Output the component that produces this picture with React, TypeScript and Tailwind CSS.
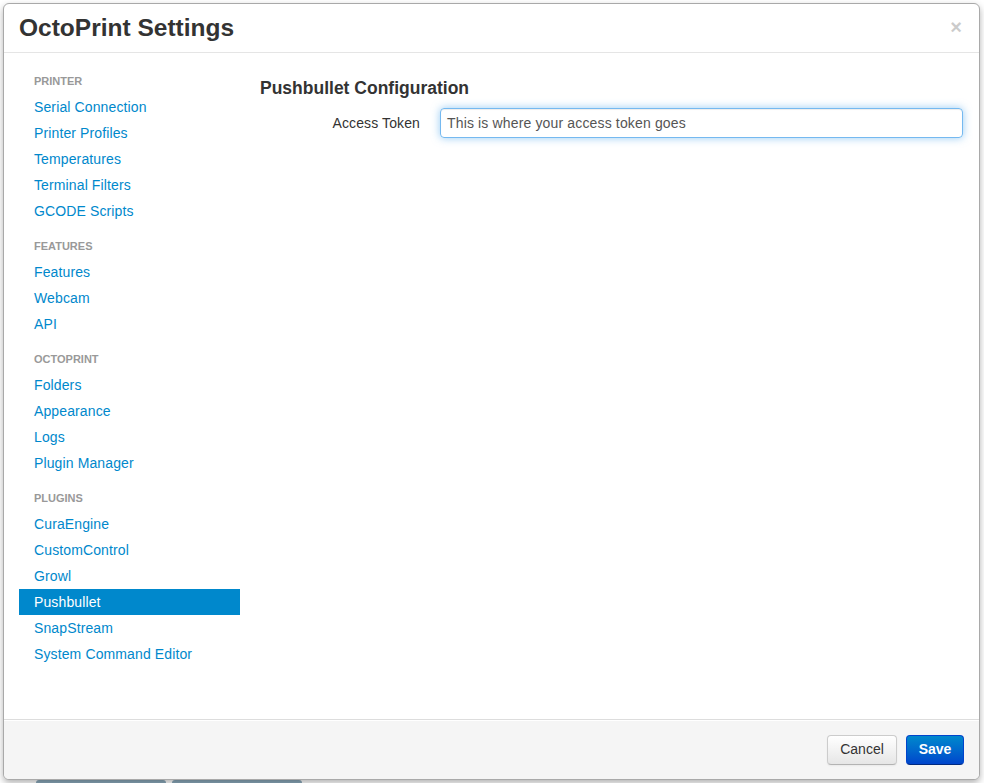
import React from "react";

const sections: { title: string; items: string[] }[] = [
  { title: "PRINTER", items: ["Serial Connection", "Printer Profiles", "Temperatures", "Terminal Filters", "GCODE Scripts"] },
  { title: "FEATURES", items: ["Features", "Webcam", "API"] },
  { title: "OCTOPRINT", items: ["Folders", "Appearance", "Logs", "Plugin Manager"] },
  { title: "PLUGINS", items: ["CuraEngine", "CustomControl", "Growl", "Pushbullet", "SnapStream", "System Command Editor"] },
];

export default function App() {
  return (
    <div className="relative w-[984px] h-[783px] overflow-hidden bg-white" style={{ fontFamily: '"Liberation Sans", Arial, sans-serif' }}>
      <div className="absolute left-[36px] top-[780px] w-[130px] h-[10px] bg-[#8aa8ba] rounded-t-[3px]" />
      <div className="absolute left-[172px] top-[780px] w-[130px] h-[10px] bg-[#8aa8ba] rounded-t-[3px]" />
      <div className="absolute left-[3px] top-[3px] w-[977px] h-[777px] flex flex-col border border-[#a9a9a9] rounded-[6px] bg-white shadow-[0_3px_7px_rgba(0,0,0,0.3)] overflow-hidden">
        <div className="h-[49px] shrink-0 flex items-center justify-between px-[15px] border-b border-[#e5e5e5]">
          <h3 className="text-[24.5px] font-bold text-[#333] leading-[30px]">OctoPrint Settings</h3>
          <span className="text-[20px] font-bold text-black opacity-20 leading-none mr-[2px] -mt-[3px]">×</span>
        </div>
        <div className="flex-1 flex px-[15px] pt-[15px]">
          <div className="w-[221px] shrink-0 flex flex-col text-[14px] tracking-[0.12px]">
            {sections.map((s, i) => (
              <div key={s.title} className={i > 0 ? "mt-[9px]" : ""}>
                <div className="h-[26px] flex items-center px-[15px] text-[11px] font-bold text-[#999] uppercase tracking-normal">{s.title}</div>
                {s.items.map((it) =>
                  it === "Pushbullet" ? (
                    <div key={it} className="h-[26px] flex items-center px-[15px] bg-[#0088cc] text-white">{it}</div>
                  ) : (
                    <div key={it} className="h-[26px] flex items-center px-[15px] text-[#0088cc]">{it}</div>
                  )
                )}
              </div>
            ))}
          </div>
          <div className="flex-1 pl-[20px]">
            <h4 className="text-[17.5px] font-bold text-[#333] leading-[20px] mt-[10px]">Pushbullet Configuration</h4>
            <div className="flex items-center mt-[10px]">
              <label className="w-[160px] text-right text-[14px] text-[#333] tracking-[0.12px]">Access Token</label>
              <div className="ml-[20px] w-[523px] h-[30px] flex items-center px-[6px] border border-[rgba(82,168,236,0.8)] rounded-[4px] shadow-[inset_0_1px_1px_rgba(0,0,0,0.075),0_0_8px_rgba(82,168,236,0.6)] text-[14px] text-[#555] tracking-[0.15px]">
                This is where your access token goes
              </div>
            </div>
          </div>
        </div>
        <div className="h-[60px] shrink-0 flex items-center justify-end gap-[9px] px-[15px] bg-[#f5f5f5] border-t border-[#ddd] shadow-[inset_0_1px_0_#fff]">
          <button className="w-[70px] h-[30px] rounded-[4px] border border-[#ccc] border-b-[#b3b3b3] bg-gradient-to-b from-white to-[#e6e6e6] text-[14px] text-[#333] shadow-[inset_0_1px_0_rgba(255,255,255,0.2),0_1px_2px_rgba(0,0,0,0.05)]">
            Cancel
          </button>
          <button className="w-[58px] h-[30px] rounded-[4px] border border-[#0044cc] border-b-[#002a80] bg-gradient-to-b from-[#0088cc] to-[#0044cc] text-[14px] font-bold text-white">
            Save
          </button>
        </div>
      </div>
    </div>
  );
}
